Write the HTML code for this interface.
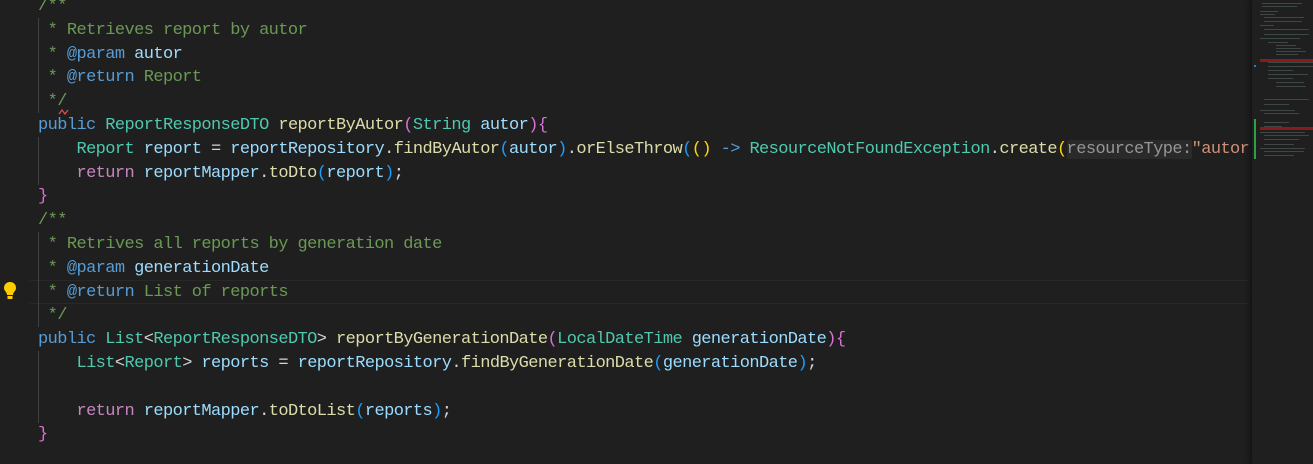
<!DOCTYPE html>
<html><head><meta charset="utf-8"><style>
html,body{margin:0;padding:0;background:#1f1f1f;width:1313px;height:464px;overflow:hidden;position:relative}
.code{position:absolute;left:38px;top:-5px;font-family:"Liberation Mono",monospace;font-size:17px;letter-spacing:-0.59px;line-height:23.8px;color:#d4d4d4;white-space:pre}
.c{color:#6a9955}.k{color:#569cd6}.t{color:#4ec9b0}.f{color:#dcdcaa}.v{color:#9cdcfe}.s{color:#ce9178}.r{color:#c586c0}
.g{color:#ffd700}.p{color:#da70d6}.b{color:#179fff}
.hint{background:#2a2a2a;color:#969696;border-radius:2px}
.guide{position:absolute;width:1px;background:#404040}
.cur{position:absolute;left:30px;width:1220px;top:280px;height:22px;border-top:1px solid #282828;border-bottom:1px solid #282828}
.mm{position:absolute;left:1252px;top:0;width:61px;height:464px;background:#1f1f1f;box-shadow:-3px 0 4px #141414}
.mm i{position:absolute;height:1px;background:#4a5a55;opacity:.7}
</style></head><body>
<div class="cur"></div>
<div class="guide" style="left:38px;top:18px;height:95px"></div>
<div class="guide" style="left:38px;top:137px;height:48px"></div>
<div class="guide" style="left:38px;top:232px;height:95px"></div>
<div class="guide" style="left:38px;top:351px;height:72px"></div>
<div class="code"><span class="c">/**
 * Retrieves report by autor
 * </span><span class="k">@param</span> <span class="v">autor</span><span class="c">
 * </span><span class="k">@return</span><span class="c"> Report
 */</span>
<span class="k">public</span> <span class="t">ReportResponseDTO</span> <span class="f">reportByAutor</span><span class="p">(</span><span class="t">String</span> <span class="v">autor</span><span class="p">){</span>
    <span class="t">Report</span> <span class="v">report</span> = <span class="v">reportRepository</span>.<span class="f">findByAutor</span><span class="b">(</span><span class="v">autor</span><span class="b">)</span>.<span class="f">orElseThrow</span><span class="b">(</span><span class="g">()</span> <span class="k">-&gt;</span> <span class="t">ResourceNotFoundException</span>.<span class="f">create</span><span class="g">(</span><span class="hint">resourceType:</span><span class="s">"autor</span>
    <span class="r">return</span> <span class="v">reportMapper</span>.<span class="f">toDto</span><span class="b">(</span><span class="v">report</span><span class="b">)</span>;
<span class="p">}</span>
<span class="c">/**
 * Retrives all reports by generation date
 * </span><span class="k">@param</span> <span class="v">generationDate</span><span class="c">
 * </span><span class="k">@return</span><span class="c"> List of reports
 */</span>
<span class="k">public</span> <span class="t">List</span>&lt;<span class="t">ReportResponseDTO</span>&gt; <span class="f">reportByGenerationDate</span><span class="p">(</span><span class="t">LocalDateTime</span> <span class="v">generationDate</span><span class="p">){</span>
    <span class="t">List</span>&lt;<span class="t">Report</span>&gt; <span class="v">reports</span> = <span class="v">reportRepository</span>.<span class="f">findByGenerationDate</span><span class="b">(</span><span class="v">generationDate</span><span class="b">)</span>;

    <span class="r">return</span> <span class="v">reportMapper</span>.<span class="f">toDtoList</span><span class="b">(</span><span class="v">reports</span><span class="b">)</span>;
<span class="p">}</span></div>
<svg style="position:absolute;left:58px;top:109px" width="14" height="6"><path d="M1 5 L4 1 L7 5 L10 1" stroke="#f14c4c" fill="none" stroke-width="1.2"/></svg>
<svg style="position:absolute;left:3px;top:281px" width="14" height="20" viewBox="0 0 14 20"><path d="M7 1 C3 1 1 4 1 7 C1 10 4 11 4 14 L10 14 C10 11 13 10 13 7 C13 4 11 1 7 1Z" fill="#ffcc00"/><rect x="4.5" y="15" width="5" height="3" fill="#ffcc00"/></svg>
<div class="mm">
<div style="position:absolute;left:8px;top:59px;width:53px;height:3px;background:#8b1a1a"></div>
<div style="position:absolute;left:8px;top:127px;width:53px;height:3px;background:#8b1a1a"></div>
<div style="position:absolute;left:2px;top:65px;width:2px;height:2px;background:#1b80e6"></div>
<div style="position:absolute;left:2px;top:119px;width:2px;height:40px;background:#2ea043"></div>
<i style="left:10px;top:3px;width:40px"></i><i style="left:10px;top:6px;width:35px"></i>
<i style="left:8px;top:11px;width:18px"></i><i style="left:8px;top:14px;width:15px"></i>
<i style="left:12px;top:17px;width:40px"></i><i style="left:12px;top:21px;width:38px"></i>
<i style="left:8px;top:25px;width:14px"></i><i style="left:12px;top:29px;width:45px"></i>
<i style="left:12px;top:34px;width:45px"></i><i style="left:8px;top:38px;width:40px"></i>
<i style="left:16px;top:42px;width:20px"></i><i style="left:24px;top:45px;width:20px"></i>
<i style="left:24px;top:48px;width:25px"></i><i style="left:24px;top:51px;width:30px"></i>
<i style="left:24px;top:54px;width:22px"></i><i style="left:16px;top:62px;width:45px"></i>
<i style="left:16px;top:66px;width:45px"></i><i style="left:16px;top:70px;width:25px"></i>
<i style="left:16px;top:74px;width:40px"></i><i style="left:16px;top:78px;width:25px"></i>
<i style="left:24px;top:82px;width:28px"></i><i style="left:24px;top:86px;width:30px"></i>
<i style="left:12px;top:99px;width:45px"></i><i style="left:12px;top:104px;width:25px"></i>
<i style="left:8px;top:110px;width:35px"></i><i style="left:12px;top:113px;width:35px"></i>
<i style="left:12px;top:122px;width:25px"></i><i style="left:12px;top:126px;width:18px"></i>
<i style="left:8px;top:132px;width:45px"></i><i style="left:12px;top:135px;width:45px"></i>
<i style="left:12px;top:139px;width:35px"></i><i style="left:12px;top:144px;width:30px"></i>
<i style="left:8px;top:148px;width:45px"></i><i style="left:12px;top:151px;width:40px"></i>
<i style="left:12px;top:155px;width:30px"></i>
</div>
</body></html>
